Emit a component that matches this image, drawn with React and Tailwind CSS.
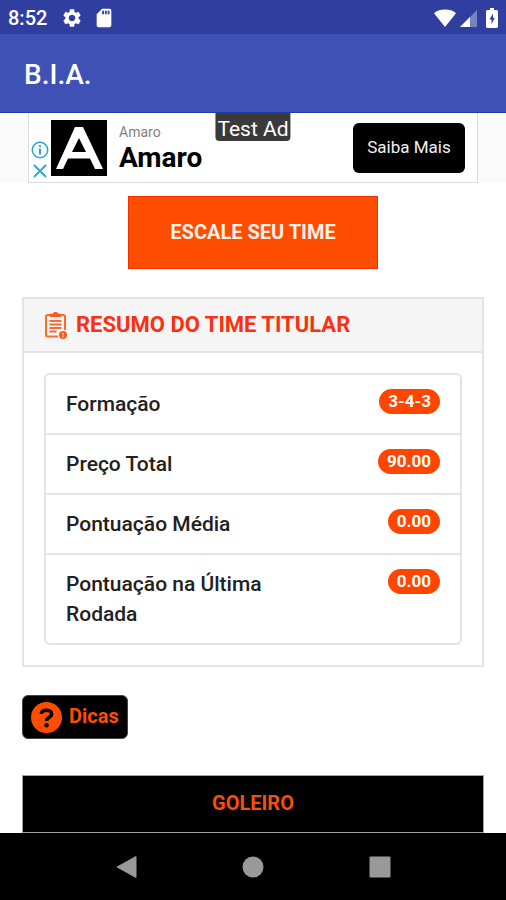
import { MdSettings, MdSdCard } from 'react-icons/md';

const summary = [
  { label: 'Formação', value: '3-4-3' },
  { label: 'Preço Total', value: '90.00' },
  { label: 'Pontuação Média', value: '0.00' },
  { label: 'Pontuação na Última Rodada', value: '0.00' },
];

const StatusBar = () => (
  <div className="h-[34px] shrink-0 flex items-center justify-between bg-[#303f9f] px-2 pt-[2px] text-white">
    <div className="flex items-center">
      <span className="text-xl leading-6 font-medium">8:52</span>
      <MdSettings className="w-[22px] h-[22px] ml-[14px]" />
      <MdSdCard className="w-[22px] h-[22px] ml-[10px]" />
    </div>
    <div className="flex items-center">
      <svg viewBox="0 0 22 18" className="w-[22px] h-[18px]" fill="currentColor">
        <path d="M11 18 0 4.2C2 2 6 .5 11 .5s9 1.5 11 3.700z" />
      </svg>
      <svg viewBox="0 0 18 18" className="w-[18px] h-[18px] ml-1" fill="currentColor">
        <path d="M17 1v17H0z" opacity=".35" />
        <path d="M10 8v10H0z" />
      </svg>
      <svg viewBox="0 0 12 20" className="w-3 h-5 ml-2" fill="currentColor">
        <path fillRule="evenodd" d="M4 0h4v2h2.5c.8 0 1.5.7 1.5 1.5v15c0 .8-.7 1.5-1.5 1.5h-9C.7 20 0 19.3 0 18.5v-15C0 2.7.7 2 1.5 2H4zM7 5.5 3.500 11.5h2V16L8.700 10H7z" />
      </svg>
    </div>
  </div>
);

const AdBanner = () => (
  <div className="relative h-[70px] shrink-0 flex justify-center bg-[#fafafa] px-7">
    <div className="w-full max-w-[450px] flex items-center bg-white border border-t-0 border-[#dcdcdc] pr-3">
      <div className="flex flex-col items-center gap-1 mt-6 mx-[2px]">
        <a href="#info" aria-label="Sobre este anúncio">
          <svg viewBox="0 0 18 18" className="w-[18px] h-[18px]" fill="none" stroke="#2aa5cc" strokeWidth="1.5">
            <circle cx="9" cy="9" r="7.7" />
            <path d="M9 7.5V13.5M9 4.2V6" strokeWidth="2.2" />
          </svg>
        </a>
        <button type="button" aria-label="Fechar anúncio">
          <svg viewBox="0 0 16 16" className="block w-4 h-4" fill="none" stroke="#2aa5cc" strokeWidth="1.8">
            <path d="m2 2 12 12M14 2 2 14" />
          </svg>
        </button>
      </div>
      <svg viewBox="0 0 56 56" className="w-14 h-14 shrink-0">
        <rect width="56" height="56" />
        <path fillRule="evenodd" fill="#fff" d="M24 7h8l20 42h-8l-5-10.5H17L12 49H5zM28 18 21 32h14z" />
      </svg>
      <div className="ml-3 pt-1 flex-1">
        <p className="text-sm leading-4 text-[#808080]">Amaro</p>
        <p className="text-[28px] leading-9 font-bold text-black">Amaro</p>
      </div>
      <button type="button" className="h-[50px] w-28 rounded-md bg-black text-[17px] text-[#f0f0f0]">Saiba Mais</button>
    </div>
    <span className="absolute top-0 left-1/2 -translate-x-1/2 h-7 px-[2px] rounded-b-sm bg-[#3a3a3a] text-[21px] leading-8 text-white whitespace-nowrap">
      Test Ad
    </span>
  </div>
);

const ClipboardIcon = () => (
  <svg viewBox="0 0 24 28" className="w-6 h-7 shrink-0" fill="none" stroke="#fb6a30" strokeWidth="2">
    <path d="M21 19V5.5Q21 4 19.5 4H3.5Q2 4 2 5.5V24Q2 25.5 3.5 25.5H14" />
    <path d="M6 2.8h3C9 .4 14 .4 14 2.8h3V6H6z" fill="#fb5a1c" stroke="none" />
    <path d="M5.5 10h12M5.5 13.5h12M5.5 17h12M5.5 20.5h7" strokeWidth="1.8" />
    <circle cx="19" cy="24" r="4" fill="#fb5a1c" stroke="none" />
    <path d="M19 21.8v2.6M19 25.2v1.2" stroke="#fff" strokeWidth="1" />
  </svg>
);

const NavBar = () => (
  <div className="h-[67px] shrink-0 flex justify-center bg-black text-[#999999]">
    <nav className="w-3/4 flex items-center justify-around">
      <button type="button" aria-label="Voltar">
        <svg viewBox="0 0 24 24" className="block w-6 h-6" fill="currentColor" stroke="currentColor" strokeLinejoin="round">
          <path d="M21 1.5v21L2 12z" />
        </svg>
      </button>
      <button type="button" aria-label="Início">
        <svg viewBox="0 0 24 24" className="block w-6 h-6" fill="currentColor">
          <circle cx="12" cy="12" r="10.5" />
        </svg>
      </button>
      <button type="button" aria-label="Recentes">
        <svg viewBox="0 0 24 24" className="block w-6 h-6" fill="currentColor">
          <rect x="1.5" y="1.5" width="21" height="21" rx="1" />
        </svg>
      </button>
    </nav>
  </div>
);

const App = () => {
  return (
    <div className="min-h-screen flex flex-col bg-white font-['Roboto',sans-serif] text-[#212121]">
      <StatusBar />

      {/* Toolbar */}
      <header className="h-[79px] shrink-0 flex items-center bg-[#3f51b5] border-b border-[#1f3bab] px-6 pt-1">
        <h1 className="text-[28px] font-medium text-white">B.I.A.</h1>
      </header>

      <AdBanner />

      <main className="flex-1 flex flex-col px-[22px] pt-[13px]">
        <button
          type="button"
          className="self-center h-[73px] w-[250px] pb-[2px] border border-[#f03000] bg-[#ff4d00] text-xl font-bold text-[#fff0e8]"
        >
          ESCALE SEU TIME
        </button>

        {/* Team summary */}
        <section className="mt-7 border-2 border-[#e4e4e4]">
          <div className="flex items-center gap-2 h-[54px] px-5 border-b-2 border-[#e4e4e4] bg-[#f5f5f5]">
            <ClipboardIcon />
            <h2 className="pb-[2px] text-[22px] font-bold text-[#fb3010]">RESUMO DO TIME TITULAR</h2>
          </div>
          <ul className="m-5 rounded-md border-2 border-[#e4e4e4] divide-y-2 divide-[#e4e4e4]">
            {summary.map((item) => (
              <li key={item.label} className="flex items-start justify-between px-5 py-[14px]">
                <span className="w-3/5 text-[21px] leading-[30px] font-medium">{item.label}</span>
                <span className="rounded-full bg-[#ff4500] px-[9px] text-[17px] leading-[25px] font-bold text-white">{item.value}</span>
              </li>
            ))}
          </ul>
        </section>

        <button
          type="button"
          className="mt-7 self-start flex items-center gap-[7px] h-11 px-2 rounded-md border border-[#444444] bg-black text-xl font-bold text-[#ff4d00]"
        >
          <svg viewBox="0 0 30 30" className="w-[31px] h-[31px]">
            <circle cx="15" cy="15" r="15" fill="#ff4d00" />
            <path d="M10 11.5C10 6.5 20 7 20 11.5C20 15 15 14.5 15 18.5" fill="none" stroke="#000" strokeWidth="3.5" />
            <circle cx="15" cy="22.5" r="2.2" />
          </svg>
          <span className="pb-[2px]">Dicas</span>
        </button>

        <h2 className="mt-9 h-[58px] flex items-center justify-center border border-[#a0a0a0] bg-black pb-[2px] text-xl font-bold text-[#f4500c]">
          GOLEIRO
        </h2>
      </main>

      <NavBar />
    </div>
  );
};

export default App;
